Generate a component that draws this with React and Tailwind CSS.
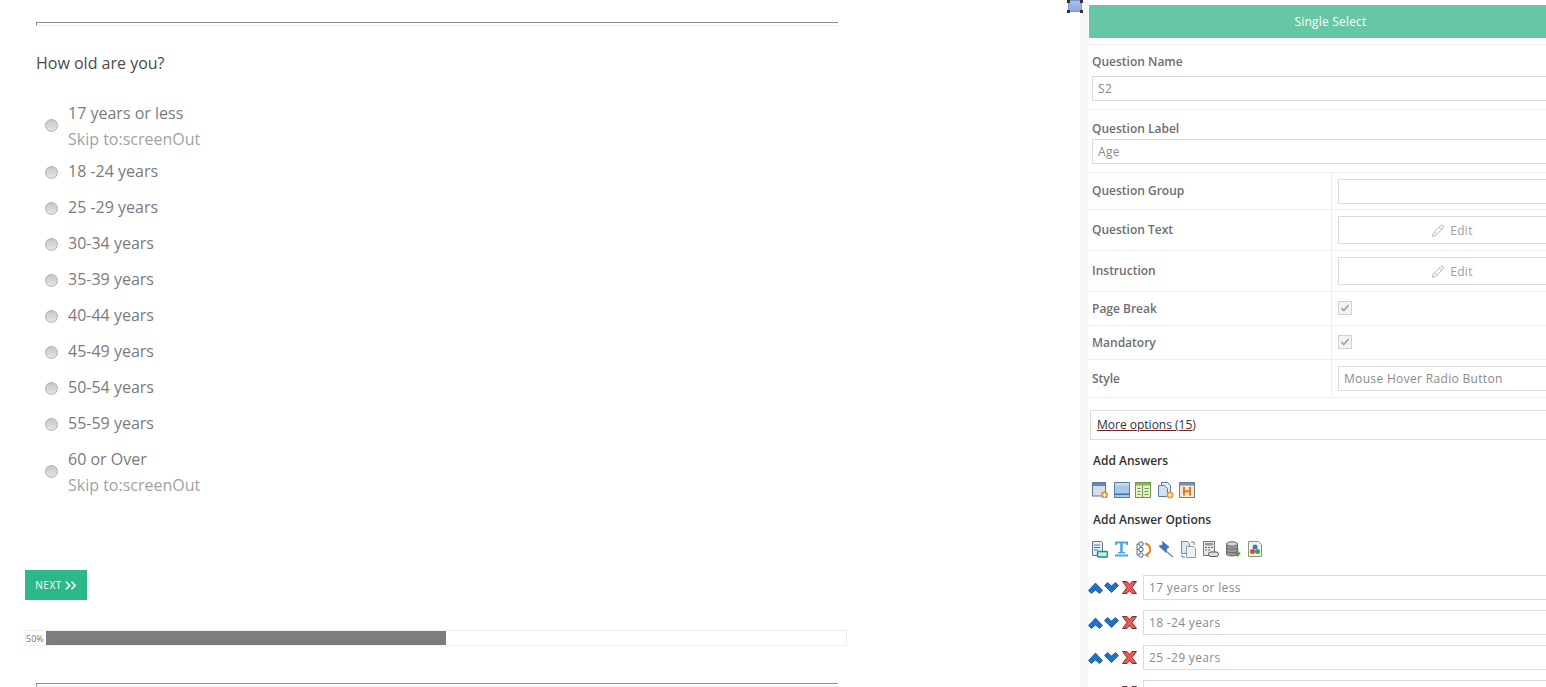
import React from 'react';

const ages = ['25 -29 years', '30-34 years', '35-39 years', '40-44 years', '45-49 years', '50-54 years', '55-59 years'];
const answers = ['17 years or less', '18 -24 years', '25 -29 years', ''];

const Radio = ({ className }) => (
  <span className={`w-[13px] h-[13px] shrink-0 rounded-full border border-[#b0b0b0] bg-gradient-to-b from-[#c8c8c8] to-[#e4e4e4] ${className}`} />
);

const Hr = () => (
  <div className="w-[802px] ml-9 h-1 border-t border-l border-t-[#8f8f8f] border-l-[#8f8f8f] border-b border-b-[#eeeeee]" />
);

const OptionRow = ({ label, skip }) => (
  <div className={`flex items-center gap-[10px] pl-[45px] ${skip ? (label === '60 or Over' ? 'h-[62px]' : 'h-[54px]') : 'h-9'}`}>
    <Radio className={skip ? '-mt-[2px]' : 'mt-[2px]'} />
    <div className="leading-[26px] text-[16px] text-[#7b7b7b]">
      <div>{label}</div>
      {skip && <div className="text-[#a2a2a2]">Skip to:screenOut</div>}
    </div>
  </div>
);

const Pencil = () => (
  <svg width="14" height="14" viewBox="0 0 14 14" fill="none" stroke="#b5b5b5" strokeWidth="1">
    <path d="M1.5 12.5l.8-3.4L9.6 1.8a1.6 1.6 0 0 1 2.4 2.3L4.8 11.5z" />
    <path d="M3.5 8l2.6 2.5M8.3 3.2l2.5 2.5" />
  </svg>
);

const Check = () => (
  <span className="-mt-[2px] w-[14px] h-[14px] flex items-center justify-center border border-[#d2d2d2] bg-[#f3f3f3]">
    <svg width="10" height="10" viewBox="0 0 10 10" fill="none" stroke="#a0a0a0" strokeWidth="1.7">
      <path d="M1.5 5.2l2.3 2.3L8.6 2" />
    </svg>
  </span>
);

const Field = ({ children, className = '' }) => (
  <div className={`flex items-center border border-[#dcdcdc] px-[5px] text-[12px] tracking-[0.33px] text-[#8a8a8a] bg-white ${className}`}>
    {children}
  </div>
);

const Label = ({ children }) => (
  <div className="text-[12px] font-semibold text-[#6e6e6e]">{children}</div>
);

const Row = ({ label, height, children }) => (
  <div className={`flex border-b border-[#eeeeee] ${height}`}>
    <div className="w-[244px] flex items-center pl-[4px] border-r border-[#eeeeee]">
      <Label>{label}</Label>
    </div>
    <div className="flex-1 flex items-center pl-[6px]">{children}</div>
  </div>
);

const EditBox = () => (
  <Field className="w-full h-[28px] justify-center gap-[5px] pt-[2px] pr-[11px] text-[#a0a0a0]">
    <Pencil />
    Edit
  </Field>
);

const Plus = () => (
  <g>
    <circle cx="12.5" cy="13" r="3.2" fill="#f0a030" stroke="#c97a10" strokeWidth="0.5" />
    <path d="M10.5 13h4M12.5 11v4" stroke="#fff" strokeWidth="1" />
  </g>
);

const answerIcons = [
  <svg key="a" width="16" height="16" viewBox="0 0 16 16">
    <rect x="0.5" y="0.5" width="13" height="13.5" fill="#d5dcea" stroke="#5d7898" />
    <rect x="1" y="1" width="12" height="3" fill="#5d8ac0" />
    <Plus />
  </svg>,
  <svg key="b" width="16" height="16" viewBox="0 0 16 16">
    <rect x="0.5" y="0.5" width="15" height="15" fill="#a9c9ea" stroke="#60809f" />
    <rect x="1" y="1" width="14" height="2.5" fill="#c8dcf0" />
    <rect x="1" y="11.5" width="14" height="1.5" fill="#3f6f9f" />
  </svg>,
  <svg key="c" width="16" height="16" viewBox="0 0 16 16">
    <rect x="0.5" y="0.5" width="15" height="15" fill="#e6f0d0" stroke="#6c9a45" />
    <rect x="1" y="1" width="14" height="2.5" fill="#8ab35e" />
    <path d="M7.500 3.500v12M2.500 6.500h3M2.500 9.500h3M2.500 12.500h3M9.500 6.500h4M9.500 9.500h4M9.500 12.500h4" stroke="#6c9a45" />
  </svg>,
  <svg key="d" width="17" height="17" viewBox="0 0 17 17">
    <path d="M4.500 3.500V.5h6l3 3v8h-9z" fill="#e4edf8" stroke="#5d7898" />
    <path d="M1.500 14.500v-11h6l3 3v8z" fill="#d3e2f3" stroke="#5d7898" />
    <circle cx="13" cy="13" r="3.500" fill="#f0a030" />
    <path d="M11 13h4M13 11v4" stroke="#fff" />
  </svg>,
  <svg key="e" width="16" height="16" viewBox="0 0 16 16">
    <rect x="0.5" y="0.5" width="15" height="15" fill="#f7e6d2" stroke="#6f7f93" />
    <rect x="1" y="1" width="14" height="2.500" fill="#6f8fb3" />
    <path d="M5 5v8.500M11 5v8.500M5 9.200h6" stroke="#e07b20" strokeWidth="2" fill="none" />
  </svg>,
];

const optionIcons = [
  <svg key="a" width="17" height="17" viewBox="0 0 17 17">
    <path d="M1.500.5h9l1 1v13h-10z" fill="#e4edf8" stroke="#5d7898" />
    <path d="M3 4h6M3 6.500h6M3 9h4" stroke="#5d7898" />
    <rect x="6.500" y="10.500" width="10" height="5.500" rx="1" fill="#bfeee0" stroke="#1f8f70" strokeWidth="1.400" />
  </svg>,
  <svg key="b" width="15" height="16" viewBox="0 0 15 16">
    <path d="M1 0.500h13v3.500h-1.500L12 2.500H8.800v8.500H11v1.500H4V11h2.200V2.500H3L2.500 4H1z" fill="#4ea7dd" />
    <rect x="1" y="13.500" width="13" height="2" fill="#4ea7dd" />
  </svg>,
  <svg key="c" width="16" height="17" viewBox="0 0 16 17" fill="none">
    <path d="M2 3v11h3M2 8.500h3M2 3h3" stroke="#6e6e6e" />
    <circle cx="6" cy="3" r="2.200" fill="#f4f4f4" stroke="#3566a8" />
    <circle cx="6" cy="8.500" r="2.200" fill="#f4f4f4" stroke="#3566a8" />
    <circle cx="6" cy="14" r="2.200" fill="#f4f4f4" stroke="#3566a8" />
    <path d="M10 2.500a6 6 0 0 1 3 10.500" stroke="#e08a2c" strokeWidth="2.200" />
    <path d="M9 14l4.500-3v5.500z" fill="#e08a2c" />
  </svg>,
  <svg key="d" width="17" height="17" viewBox="0 0 17 17">
    <path d="M5.500 0.500l6.500 5.500-2 1-1 4.500-7-6.500 3.800-1z" fill="#3f79c4" stroke="#2a5a9c" strokeWidth="0.600" />
    <path d="M9 10l7 6" stroke="#8a8a8a" strokeWidth="1.500" />
  </svg>,
  <svg key="e" width="17" height="17" viewBox="0 0 17 17">
    <path d="M1.500 0.500h6l2 2v10h-8z" fill="#dce9f7" stroke="#6c8cb0" />
    <path d="M6.500 5.500h7l2 2v9h-9z" fill="#f1f1f1" stroke="#9a9a9a" />
    <path d="M11 1h3v3M2 14v2h3" fill="none" stroke="#4a84bf" />
  </svg>,
  <svg key="f" width="16" height="16" viewBox="0 0 16 16">
    <rect x="0.500" y="0.500" width="11" height="14" fill="#e8e8e8" stroke="#777" />
    <rect x="2" y="2" width="8" height="2.500" fill="#8a9bb0" />
    <path d="M2 6.500h2M5 6.500h2M8 6.500h2M2 9h2M5 9h2" stroke="#666" />
    <rect x="5.500" y="11" width="10" height="4.500" rx="2.200" fill="#ddd" stroke="#555" />
  </svg>,
  <svg key="g" width="17" height="17" viewBox="0 0 17 17">
    <path d="M1.500 3v10c0 2.500 11 2.500 11 0V3z" fill="#9a9a9a" stroke="#666" />
    <ellipse cx="7" cy="3" rx="5.500" ry="2.300" fill="#d0d0d0" stroke="#666" />
    <path d="M1.500 6.500c0 2.300 11 2.300 11 0M1.500 10c0 2.300 11 2.300 11 0" stroke="#666" fill="none" />
    <path d="M12.500 8v6M10 11.500l2.500 3 2.500-3" stroke="#4f9a3a" strokeWidth="1.800" fill="none" />
  </svg>,
  <svg key="h" width="14" height="16" viewBox="0 0 14 16">
    <path d="M.5.5h10l3 3v12H.5z" fill="#f1f6ea" stroke="#7f9a7a" />
    <circle cx="7" cy="6" r="2.500" fill="#3f79c4" />
    <circle cx="4.500" cy="10.500" r="2.500" fill="#d8483a" />
    <circle cx="9.500" cy="10.500" r="2.500" fill="#4f9a3a" />
  </svg>,
];

const Chevron = ({ down }) => (
  <svg width="15" height="12" viewBox="0 0 15 12">
    <path
      d={down ? 'M0.500 3.500l3-3 4 3.500 4-3.500 3 3-7 7z' : 'M0.500 8.500l3 3 4-3.500 4 3.500 3-3-7-7.500z'}
      fill="#1e73c8"
      stroke="#0f3f78"
      strokeWidth="0.700"
    />
  </svg>
);

const RedX = () => (
  <svg className="ml-[2px] -mt-px" width="15" height="13" viewBox="0 0 15 13">
    <path
      d="M0.500 0.500h4.500l2.500 3 2.500-3h4.500l-4.500 6 4.500 6h-4.500l-2.500-3-2.500 3h-4.500l4.500-6z"
      fill="#ee5a5a"
      stroke="#5a1515"
      strokeWidth="0.800"
    />
  </svg>
);

export default function App() {
  return (
    <div className="relative flex h-[687px] overflow-hidden bg-white font-['Open_Sans',sans-serif]">
      {/* Survey preview */}
      <div className="w-[1080px] shrink-0 pt-[22px]">
        <Hr />
        <div className="mt-[26px] ml-9 text-[16px] leading-[22px] text-[#4a4a4a]">How old are you?</div>
        <div className="mt-[25px]">
          <OptionRow label="17 years or less" skip />
          <OptionRow label="18 -24 years" />
          {ages.map((age) => (
            <OptionRow key={age} label={age} />
          ))}
          <OptionRow label="60 or Over" skip />
        </div>
        <button className="mt-[67px] ml-[25px] w-[62px] h-[30px] flex items-center justify-center gap-[3px] bg-[#2db88a] text-[10px] tracking-[0.5px] text-white">
          NEXT
          <svg width="12" height="9" viewBox="0 0 12 9" fill="none" stroke="#fff" strokeWidth="1.600">
            <path d="M1 .8l3.600 3.700L1 8.200M6.500 .8l3.600 3.700-3.600 3.700" />
          </svg>
        </button>
        <div className="mt-[30px] ml-[25px] w-[822px] h-4 flex items-center border border-[#eeeeee]">
          <span className="w-5 text-[9px] leading-none text-[#777777]">50%</span>
          <div className="w-[400px] h-[14px] bg-[#7d7d80]" />
        </div>
        <div className="mt-[37px]">
          <Hr />
        </div>
      </div>

      {/* Gutter */}
      <div className="w-2 shrink-0 bg-[#f6f6f6]" />

      {/* Question editor */}
      <div className="w-[484px] shrink-0 pt-[5px] pl-px">
        <div className="h-[33px] flex items-center justify-center bg-[#66c7a5] text-[12px] tracking-[0.2px] text-white">
          Single Select
        </div>
        <div className="mt-[6px] -ml-px h-[66px] border-t border-b border-[#eeeeee] pl-[4px] pt-[8px]">
          <Label>Question Name</Label>
          <Field className="mt-[5px] h-[25px]">S2</Field>
        </div>
        <div className="-ml-px h-[63px] border-b border-[#eeeeee] pl-[4px] pt-[10px]">
          <Label>Question Label</Label>
          <Field className="mt-px h-[25px]">Age</Field>
        </div>
        <div className="-ml-px">
          <Row label="Question Group" height="h-[37px]">
            <Field className="w-full h-[25px]" />
          </Row>
          <Row label="Question Text" height="h-[41px]">
            <EditBox />
          </Row>
          <Row label="Instruction" height="h-[41px]">
            <EditBox />
          </Row>
          <Row label="Page Break" height="h-[34px]">
            <Check />
          </Row>
          <Row label="Mandatory" height="h-[34px]">
            <Check />
          </Row>
          <Row label="Style" height="h-[38px]">
            <Field className="w-full h-[25px]">Mouse Hover Radio Button</Field>
          </Row>
        </div>
        <div className="mt-3 ml-px h-[30px] flex items-center border border-[#dddddd] pl-[6px] text-[12px] text-[#333333]">
          <span className="underline decoration-[#7a1f1f]">More options (15</span>)
        </div>
        <div className="mt-[12px] ml-[4px] text-[12px] font-semibold leading-[18px] text-[#333333]">Add Answers</div>
        <div className="mt-[12px] ml-[3px] flex items-center gap-[5.5px] h-4">{answerIcons}</div>
        <div className="mt-[13px] ml-[4px] text-[12px] font-semibold leading-[18px] text-[#333333]">Add Answer Options</div>
        <div className="mt-[12px] ml-[2px] flex items-center gap-[6px] h-4">{optionIcons}</div>
        <div className="mt-[18px] flex flex-col gap-[10px]">
          {answers.map((answer, i) => (
            <div key={i} className="flex items-center">
              <div className="w-[54px] flex items-center gap-[1px] -ml-px">
                <Chevron />
                <Chevron down />
                <RedX />
              </div>
              <Field className="flex-1 h-[25px] ml-px">{answer}</Field>
            </div>
          ))}
        </div>
      </div>

      {/* Selection handle */}
      <div className="absolute left-[1068px] top-0 w-[14px] h-[12px] border border-[#7d97cc] bg-gradient-to-b from-[#a9c0ee] to-[#8ca8de]">
        <span className="absolute -left-[2px] -top-[1px] w-[3px] h-[3px] bg-[#333333]" />
        <span className="absolute -right-[2px] -top-[1px] w-[3px] h-[3px] bg-[#333333]" />
        <span className="absolute -left-[2px] -bottom-[2px] w-[3px] h-[3px] bg-[#333333]" />
        <span className="absolute -right-[2px] -bottom-[2px] w-[3px] h-[3px] bg-[#333333]" />
      </div>
    </div>
  );
}
